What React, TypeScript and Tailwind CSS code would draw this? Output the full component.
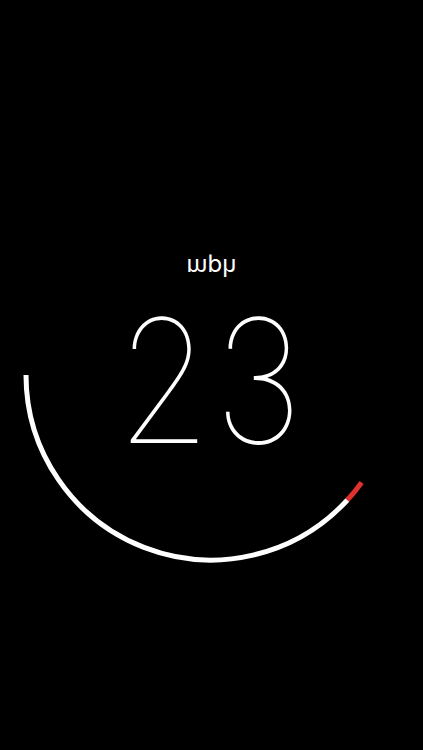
import React from "react"

function Gauge() {
  // centre (211, 375), radius 185, from the left side round the bottom to ~36deg
  const cx = 211
  const cy = 375
  const r = 185
  const pt = (deg: number) => {
    const a = (deg * Math.PI) / 180
    return [cx + r * Math.cos(a), cy + r * Math.sin(a)]
  }
  const [sx, sy] = pt(180)
  const [mx, my] = pt(42.5)
  const [ex, ey] = pt(35.5)
  return (
    <svg className="absolute inset-0" width="423" height="750" viewBox="0 0 423 750">
      <path
        d={`M ${sx} ${sy} A ${r} ${r} 0 0 0 ${mx} ${my}`}
        fill="none"
        stroke="#ffffff"
        strokeWidth="5"
      />
      <path
        d={`M ${mx} ${my} A ${r} ${r} 0 0 0 ${ex} ${ey}`}
        fill="none"
        stroke="#e0312f"
        strokeWidth="5"
      />
    </svg>
  )
}

export default function App() {
  return (
    <div className="relative w-full h-[750px] bg-black overflow-hidden">
      <Gauge />
      <div className="relative flex flex-col items-center pt-[255px] text-white">
        <div className="scale-y-[-1] text-[24px] leading-none font-['Inter',sans-serif] font-normal">
          mph
        </div>
        <div className="mt-[15px] -translate-x-[2px] scale-x-[0.88] text-[172px] leading-none font-['Inter',sans-serif] font-thin tracking-[4px] pl-[4px]">
          23
        </div>
      </div>
    </div>
  )
}
